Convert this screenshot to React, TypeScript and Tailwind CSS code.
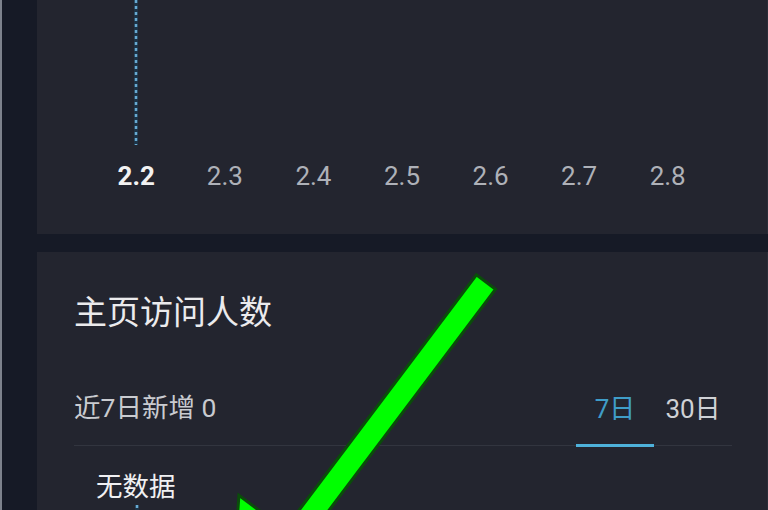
import React from "react";

const labels = ["2.2", "2.3", "2.4", "2.5", "2.6", "2.7", "2.8"];

function DashedV({ height }: { height: number }) {
  return (
    <svg width="6" height={height} className="block">
      <line x1="3" y1="0" x2="3" y2={height} stroke="#1d3346" strokeWidth="4" />
      <line x1="3" y1="0" x2="3" y2={height} stroke="#68aad2" strokeWidth="2.5" strokeDasharray="3 3" />
    </svg>
  );
}

export default function App() {
  return (
    <div className="relative w-[768px] h-[510px] overflow-hidden bg-[#161a26] font-['Roboto','Noto_Sans_CJK_SC',sans-serif] border-l-2 border-[#7d828c]">
      <div className="flex flex-col gap-[18px] pl-[35px]">
        {/* Card 1: chart */}
        <div className="h-[234px] bg-[#23252f] flex flex-col border-r border-[#2a2d38]">
          <div className="h-[145px] grid grid-cols-7 w-[620px] ml-[55px]">
            <div className="flex justify-center">
              <DashedV height={145} />
            </div>
          </div>
          <div className="mt-[17px] grid grid-cols-7 w-[620px] ml-[55px]">
            {labels.map((l, i) => (
              <div
                key={l}
                className={
                  i === 0
                    ? "text-center text-[26px] leading-[28px] font-bold text-[#f2f2f2]"
                    : "text-center text-[26px] leading-[28px] text-[#aeb1b8]"
                }
              >
                {l}
              </div>
            ))}
          </div>
        </div>

        {/* Card 2 */}
        <div className="h-[300px] bg-[#23252f] pt-[41px] pl-[37px] pr-[35px] border-r border-[#2a2d38]">
          <div className="text-[33px] leading-[40px] text-[#ebebed]">主页访问人数</div>
          <div className="mt-[59px] flex items-end justify-between border-b border-[#32353f]">
            <div className="pb-[21px] text-[26.5px] leading-[32px] text-[#c9cbd0]">近7日新增 0</div>
            <div className="flex -mb-[2px]">
              <div className="w-[78px] text-center text-[26px] leading-[32px] text-[#3f9dc8] pb-[19px] border-b-[3px] border-[#4eb1da]">
                7日
              </div>
              <div className="w-[78px] text-center text-[26px] leading-[32px] text-[#cfd1d5] pb-[19px] border-b-[3px] border-transparent">
                30日
              </div>
            </div>
          </div>
          <div className="mt-[25px] ml-[22px] text-[26.5px] leading-[32px] text-[#f0f0f2]">无数据</div>
          <div className="mt-[2px] ml-[60px]">
            <DashedV height={40} />
          </div>
        </div>
      </div>

      {/* Green arrow overlay */}
      <svg className="absolute left-0 top-0 pointer-events-none" width="768" height="510" viewBox="0 0 768 510">
        <g transform="translate(484 282) rotate(127)">
          <polygon
            points="0,-12 319,-12 319,-69 425,0 319,69 319,12 0,12"
            fill="#00ff00"
            stroke="#0a4d0a"
            strokeWidth="3"
            strokeLinejoin="miter"
          />
        </g>
      </svg>
    </div>
  );
}
